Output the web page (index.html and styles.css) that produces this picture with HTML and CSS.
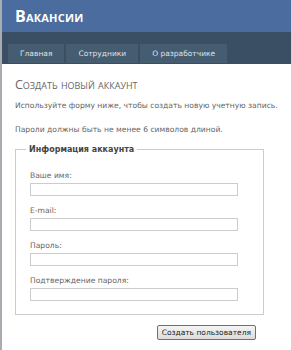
FILE: index.html
```html
<!DOCTYPE html>
<html lang="ru">
<head>
<meta charset="utf-8">
<link rel="stylesheet" href="styles.css">
</head>
<body>
<div class="page">
  <header class="header">
    <h1 class="title">Вакансии</h1>
  </header>
  <nav class="menu">
    <a class="tab">Главная</a>
    <a class="tab">Сотрудники</a>
    <a class="tab">О разработчике</a>
  </nav>
  <main class="main">
    <h2 class="heading">Создать новый аккаунт</h2>
    <p class="text">Используйте форму ниже, чтобы создать новую учетную запись.</p>
    <p class="text text-last">Пароли должны быть не менее 6 символов длиной.</p>
    <fieldset class="box">
      <legend class="legend">Информация аккаунта</legend>
      <div class="field">
        <label class="label">Ваше имя:</label>
        <input class="input" type="text">
      </div>
      <div class="field">
        <label class="label">E-mail:</label>
        <input class="input" type="text">
      </div>
      <div class="field">
        <label class="label">Пароль:</label>
        <input class="input" type="password">
      </div>
      <div class="field">
        <label class="label">Подтверждение пароля:</label>
        <input class="input" type="password">
      </div>
    </fieldset>
    <div class="actions">
      <button class="button">Создать пользователя</button>
    </div>
  </main>
</div>
</body>
</html>
```

FILE: styles.css
```css
html, body {
  margin: 0;
  padding: 0;
  background: #fff;
}
.page {
  border-left: 2px solid #a9acb0;
  min-height: 350px;
  font-family: "DejaVu Sans", "Open Sans", sans-serif;
  color: #666;
}
.header {
  background: #4b6c9e;
  height: 32px;
  padding-left: 13px;
  display: flex;
  align-items: center;
}
.title {
  margin: 0;
  color: #fff;
  font-family: "Open Sans", "DejaVu Sans", sans-serif;
  font-size: 16px;
  font-weight: bold;
  font-variant: small-caps;
  letter-spacing: 0.2px;
}
.menu {
  background: #3a4f63;
  height: 32px;
  padding-left: 6px;
  display: flex;
  align-items: flex-end;
  gap: 2px;
  box-sizing: border-box;
  padding-bottom: 1px;
}
.tab {
  background: #465c71;
  color: #dde4ec;
  font-size: 7.5px;
  height: 19px;
  padding: 0 12px;
  display: flex;
  align-items: center;
}
.main {
  padding: 13px 10px 0 13px;
}
.heading {
  margin: 0 0 8px 0;
  font-family: "Open Sans", "DejaVu Sans", sans-serif;
  font-size: 12.5px;
  line-height: 16px;
  font-weight: normal;
  font-variant: small-caps;
  color: #666;
}
.text {
  margin: 0 0 14px 0;
  font-size: 7.6px;
  line-height: 10px;
  color: #666;
  white-space: nowrap;
}
.text-last {
  margin-bottom: 10px;
}
.box {
  margin: 0 17px 0 0;
  border: 1px solid #ccc;
  padding: 17px 14px 13px 14px;
  display: flex;
  flex-direction: column;
  gap: 10px;
}
.legend {
  font-size: 8px;
  font-weight: bold;
  color: #444;
  padding: 0 3px;
  margin-left: -4px;
}
.field {
  display: flex;
  flex-direction: column;
  gap: 2px;
}
.label {
  font-size: 7.6px;
  line-height: 10px;
  color: #666;
}
.input {
  width: 208px;
  height: 13px;
  box-sizing: border-box;
  border: 1px solid #ccc;
  margin: 0;
  padding: 0;
}
.actions {
  display: flex;
  justify-content: flex-end;
  padding-top: 10px;
  padding-right: 25px;
}
.button {
  font-family: "DejaVu Sans", sans-serif;
  font-size: 7.5px;
  color: #222;
  background: linear-gradient(#f4f4f4, #dcdcdc);
  border: 1px solid #707070;
  border-radius: 2px;
  height: 15px;
  padding: 0 4px;
}
```
